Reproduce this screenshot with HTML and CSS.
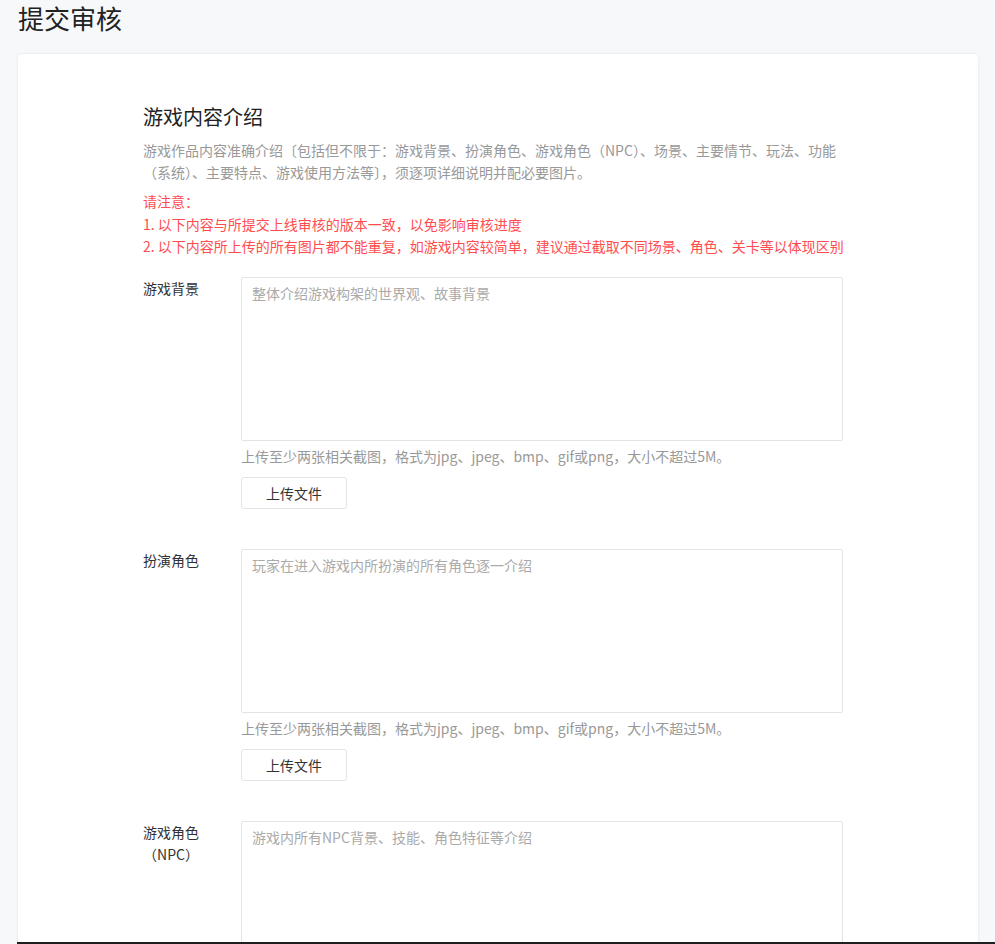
FILE: index.html
```html
<!DOCTYPE html>
<html lang="zh-CN">
<head>
    <meta charset="UTF-8">
    <meta name="viewport" content="width=device-width, initial-scale=1.0">
    <title>提交审核</title>
    <link rel="stylesheet" href="styles.css">
</head>
<body>
    <div class="page">
        <h1 class="page-title">提交审核</h1>

        <div class="card">
            <h2 class="section-title">游戏内容介绍</h2>
            <p class="section-desc">游戏作品内容准确介绍〔包括但不限于：游戏背景、扮演角色、游戏角色（NPC）、场景、主要情节、玩法、功能（系统）、主要特点、游戏使用方法等〕，须逐项详细说明并配必要图片。</p>

            <div class="notice">
                <p>请注意：</p>
                <p>1. 以下内容与所提交上线审核的版本一致，以免影响审核进度</p>
                <p>2. 以下内容所上传的所有图片都不能重复，如游戏内容较简单，建议通过截取不同场景、角色、关卡等以体现区别</p>
            </div>

            <!-- 游戏背景 -->
            <div class="form-item">
                <label class="form-label" for="bg">游戏背景</label>
                <div class="form-control">
                    <textarea id="bg" placeholder="整体介绍游戏构架的世界观、故事背景"></textarea>
                    <p class="hint">上传至少两张相关截图，格式为jpg、jpeg、bmp、gif或png，大小不超过5M。</p>
                    <button type="button" class="upload-btn">上传文件</button>
                </div>
            </div>

            <!-- 扮演角色 -->
            <div class="form-item">
                <label class="form-label" for="role">扮演角色</label>
                <div class="form-control">
                    <textarea id="role" placeholder="玩家在进入游戏内所扮演的所有角色逐一介绍"></textarea>
                    <p class="hint">上传至少两张相关截图，格式为jpg、jpeg、bmp、gif或png，大小不超过5M。</p>
                    <button type="button" class="upload-btn">上传文件</button>
                </div>
            </div>

            <!-- 游戏角色 -->
            <div class="form-item">
                <label class="form-label" for="npc">游戏角色（NPC）</label>
                <div class="form-control">
                    <textarea id="npc" placeholder="游戏内所有NPC背景、技能、角色特征等介绍"></textarea>
                    <p class="hint">上传至少两张相关截图，格式为jpg、jpeg、bmp、gif或png，大小不超过5M。</p>
                    <button type="button" class="upload-btn">上传文件</button>
                </div>
            </div>
        </div>
    </div>

    <div class="bottom-line"></div>
</body>
</html>
```

FILE: styles.css
```css
/* Page */
body {
    margin: 0;
    background-color: #f7f8fa;
    font-family: "Noto Sans CJK SC", "Noto Sans", sans-serif;
    color: #333;
}

.page {
    padding: 0 17px 40px 18px;
}

.page-title {
    margin: 0;
    font-size: 26px;
    font-weight: normal;
    line-height: 36px;
    color: #222;
}

.card {
    margin-top: 18px;
    background-color: white;
    border-radius: 4px;
    box-shadow: 0 0 3px rgba(0, 0, 0, 0.09);
    padding: 48px 127px 40px 125px;
}

.section-title {
    margin: 0 0 7px;
    font-size: 20px;
    font-weight: normal;
    line-height: 30px;
    color: #222;
}

.section-desc {
    margin: 0;
    font-size: 14px;
    line-height: 22px;
    color: #999;
}

.notice {
    margin-top: 7px;
    color: #ff4d4f;
    font-size: 14px;
}

.notice p {
    margin: 0;
    line-height: 22.5px;
    white-space: nowrap;
}

/* Form rows */
.form-item {
    display: flex;
    margin-top: 19px;
}

.form-item + .form-item {
    margin-top: 40px;
}

.form-label {
    width: 56px;
    margin-right: 42px;
    font-size: 14px;
    line-height: 22px;
    text-align: center;
    color: #333;
}

.form-control {
    width: 602px;
}

.form-control textarea {
    display: block;
    box-sizing: border-box;
    width: 602px;
    height: 164px;
    padding: 4px 10px;
    border: 1px solid #e4e4e4;
    border-radius: 2px;
    resize: none;
    font-family: inherit;
    font-size: 14px;
    line-height: 22px;
    color: #333;
    outline: none;
}

.form-control textarea::placeholder {
    color: #aaa;
}

.hint {
    margin: 4px 0 10px;
    font-size: 14px;
    line-height: 22px;
    color: #999;
}

.upload-btn {
    width: 106px;
    height: 32px;
    background-color: white;
    border: 1px solid #e4e4e4;
    border-radius: 3px;
    font-family: inherit;
    font-size: 14px;
    color: #333;
    cursor: pointer;
}

.bottom-line {
    position: fixed;
    left: 17px;
    right: 0;
    bottom: 0;
    height: 2px;
    background-color: #1f1f1f;
}
```
